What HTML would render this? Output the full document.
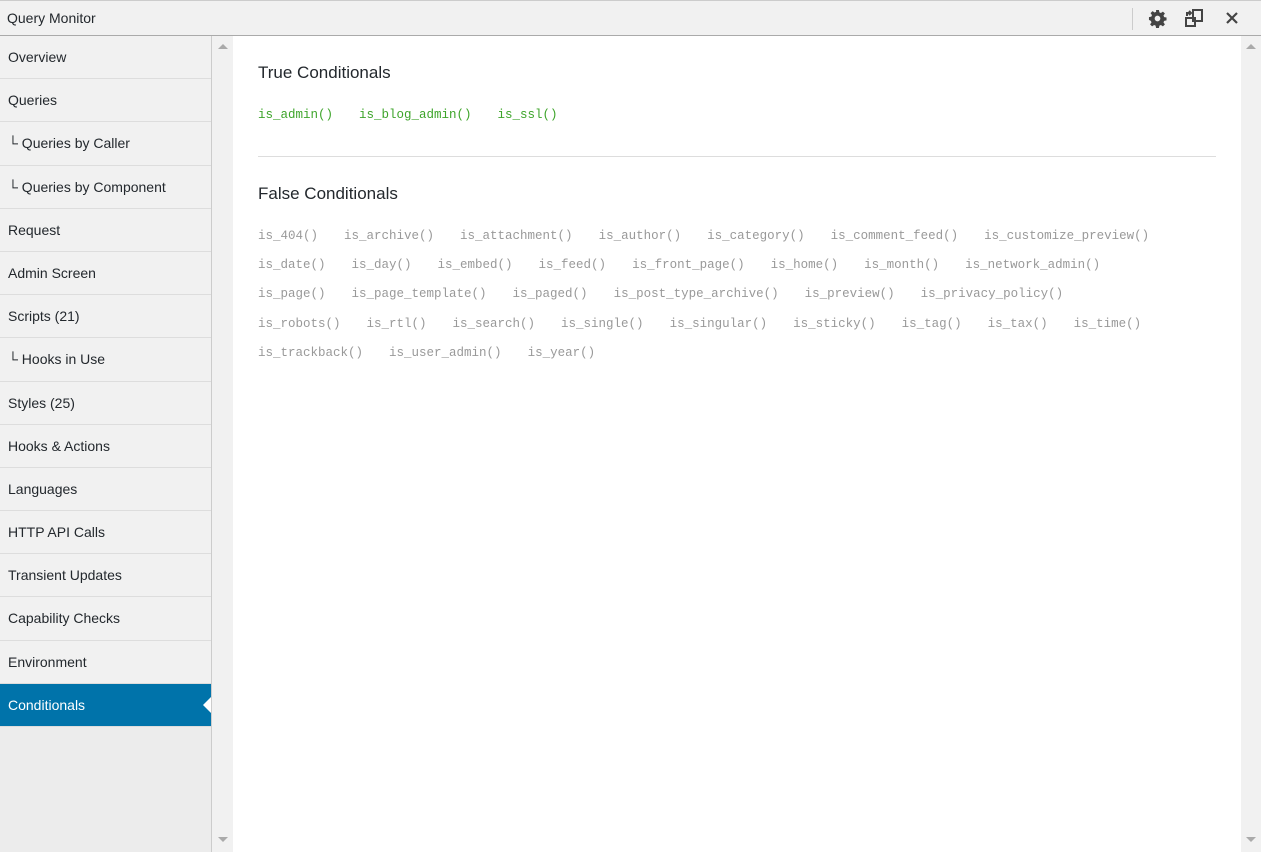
<!DOCTYPE html>
<html><head><meta charset="utf-8"><style>
*{margin:0;padding:0;box-sizing:border-box}
body{width:1261px;height:852px;overflow:hidden;background:#fff;font-family:"Liberation Sans",sans-serif;position:relative}
.top{position:absolute;left:0;top:0;width:1261px;height:36px;background:#f1f1f1;border-top:1px solid #ccc;border-bottom:1px solid #aaa}
.top .t{position:absolute;left:7px;top:9px;font-size:14px;color:#23282d}
.sep{position:absolute;left:1132px;top:7px;width:1px;height:22px;background:#ccc}
.side{position:absolute;left:0;top:36px;width:212px;height:816px;background:#ececec;border-right:1px solid #ccc}
.it{height:43.2px;border-bottom:1px solid #ddd;background:#f1f1f1;font-size:14px;color:#23282d;padding:13px 0 0 8px;position:relative}
.it.a{background:#0073aa;color:#fff}
.it.a:after{content:"";position:absolute;right:0;top:13px;border:8px solid transparent;border-right:8px solid #fff;border-left-width:0;}
.g1{position:absolute;left:212px;top:36px;width:21px;height:816px;background:#f1f1f1}
.g2{position:absolute;left:1241px;top:36px;width:20px;height:816px;background:#f1f1f1}
.up{position:absolute;width:0;height:0;border-left:5px solid transparent;border-right:5px solid transparent}
h2{position:absolute;left:258px;font-weight:normal;font-size:17px;color:#23282d}
.row{position:absolute;left:258px;font-family:"Liberation Mono",monospace;font-size:12.5px;white-space:nowrap}
.row span{margin-right:26px}
.gr{color:#3da42a}.gy{color:#999}
hr{position:absolute;left:258px;top:156px;width:958px;border:0;border-top:1px solid #ddd}
</style></head><body>
<div class="top"><div class="t">Query Monitor</div><div class="sep"></div>
<svg style="position:absolute;left:1148px;top:8px" width="19" height="19" viewBox="0 0 20 20"><path fill="#444" d="M8.5 1h3l.5 2.5 1.6.7 2.1-1.5 2.1 2.1-1.5 2.1.7 1.6 2.5.5v3l-2.5.5-.7 1.6 1.5 2.1-2.1 2.1-2.1-1.5-1.6.7-.5 2.5h-3l-.5-2.5-1.6-.7-2.1 1.5-2.1-2.1 1.5-2.1-.7-1.6L1 11.5v-3l2.5-.5.7-1.6-1.5-2.1 2.1-2.1 2.1 1.5 1.6-.7zM10 7a3 3 0 100 6 3 3 0 000-6z"/></svg>
<svg style="position:absolute;left:1185px;top:8px" width="19" height="19" viewBox="0 0 19 19" fill="none" stroke="#444" stroke-width="2"><rect x="8" y="1" width="9" height="11"/><rect x="1" y="9" width="9" height="8"/><path d="M2 7V4h4M4 2l2 2-2 2"/></svg>
<svg style="position:absolute;left:1226px;top:11px" width="12" height="12" viewBox="0 0 12 12" stroke="#444" stroke-width="2.2"><path d="M1 1l10 10M11 1L1 11"/></svg>
</div>
<div class="side">
<div class="it">Overview</div><div class="it">Queries</div><div class="it">└ Queries by Caller</div><div class="it">└ Queries by Component</div><div class="it">Request</div><div class="it">Admin Screen</div><div class="it">Scripts (21)</div><div class="it">└ Hooks in Use</div><div class="it">Styles (25)</div><div class="it">Hooks &amp; Actions</div><div class="it">Languages</div><div class="it">HTTP API Calls</div><div class="it">Transient Updates</div><div class="it">Capability Checks</div><div class="it">Environment</div><div class="it a">Conditionals</div>
</div>
<div class="g1"><div class="up" style="left:6px;top:8px;border-bottom:5px solid #aaa"></div><div class="up" style="left:6px;top:801px;border-top:5px solid #aaa"></div></div>
<div class="g2"><div class="up" style="left:5px;top:8px;border-bottom:5px solid #aaa"></div><div class="up" style="left:5px;top:801px;border-top:5px solid #aaa"></div></div>
<h2 style="top:63px">True Conditionals</h2>
<div class="row gr" style="top:108px"><span>is_admin()</span><span>is_blog_admin()</span><span>is_ssl()</span></div>
<hr>
<h2 style="top:184px">False Conditionals</h2>
<div class="row gy" style="top:229px"><span>is_404()</span><span>is_archive()</span><span>is_attachment()</span><span>is_author()</span><span>is_category()</span><span>is_comment_feed()</span><span>is_customize_preview()</span></div>
<div class="row gy" style="top:258px"><span>is_date()</span><span>is_day()</span><span>is_embed()</span><span>is_feed()</span><span>is_front_page()</span><span>is_home()</span><span>is_month()</span><span>is_network_admin()</span></div>
<div class="row gy" style="top:287px"><span>is_page()</span><span>is_page_template()</span><span>is_paged()</span><span>is_post_type_archive()</span><span>is_preview()</span><span>is_privacy_policy()</span></div>
<div class="row gy" style="top:317px"><span>is_robots()</span><span>is_rtl()</span><span>is_search()</span><span>is_single()</span><span>is_singular()</span><span>is_sticky()</span><span>is_tag()</span><span>is_tax()</span><span>is_time()</span></div>
<div class="row gy" style="top:346px"><span>is_trackback()</span><span>is_user_admin()</span><span>is_year()</span></div>
</body></html>
